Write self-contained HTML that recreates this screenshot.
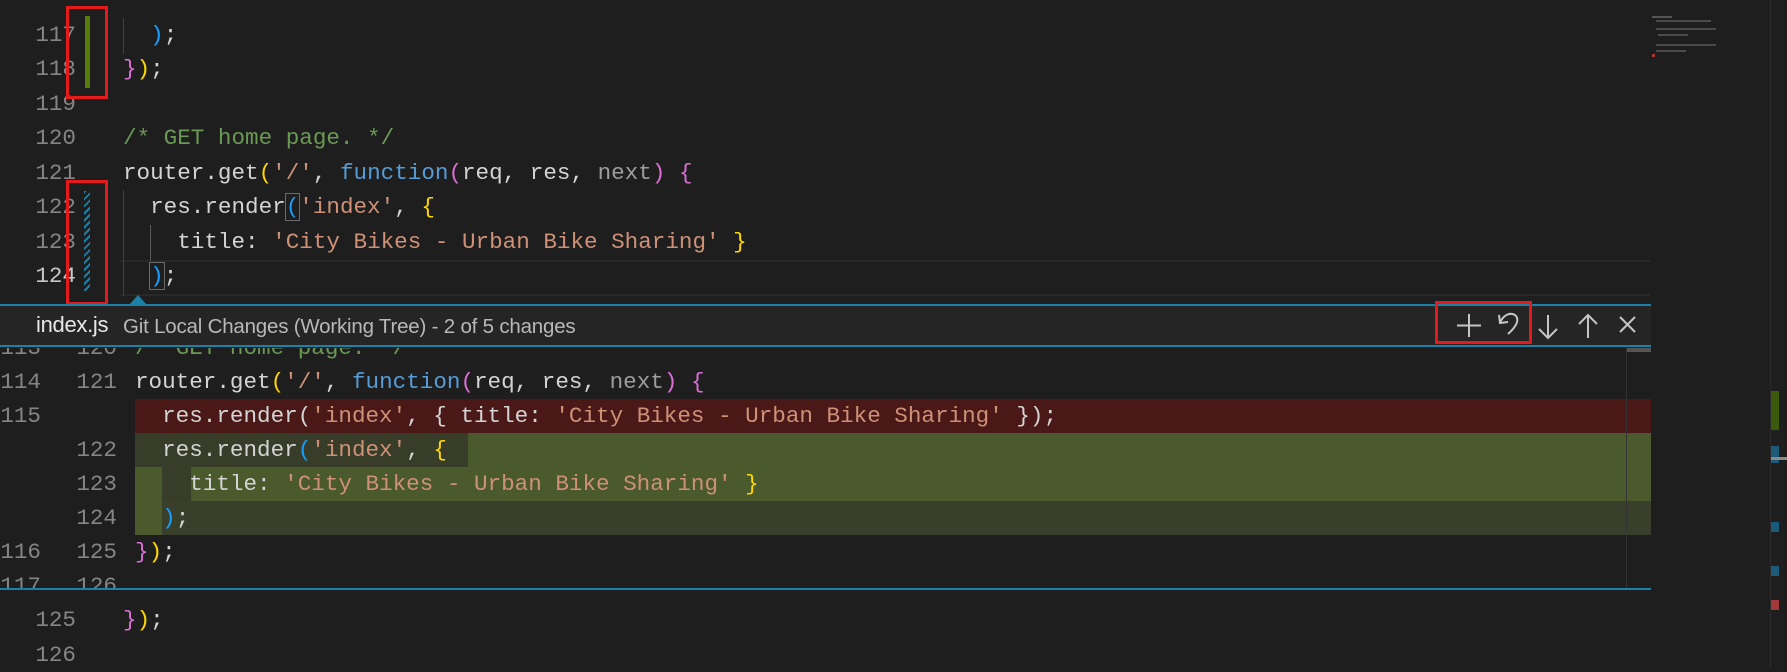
<!DOCTYPE html>
<html><head><meta charset="utf-8"><style>
*{margin:0;padding:0;box-sizing:border-box}
body{width:1787px;height:667px;background:#1e1e1e;overflow:hidden;position:relative;font-family:"Liberation Mono",monospace;font-size:22.6px;color:#d4d4d4}
.l{position:absolute;height:34px;line-height:34px;white-space:pre}
.n{position:absolute;height:34px;line-height:34px;text-align:right;color:#858585;white-space:pre}
.s{color:#ce9178}.c{color:#6a9955}.k{color:#569cd6}.y{color:#ffd700}.p{color:#da70d6}.b{color:#179fff}.g{color:#9d9d9d}.v{color:#d4d4d4}
.box{position:absolute;border:3px solid #e51b1b}
.bx{outline:1px solid #6a6a6a}
</style></head><body>
<div style="position:absolute;left:120px;top:260px;width:1530px;height:36px;border-top:2px solid #282828;border-bottom:2px solid #282828"></div>
<div style="position:absolute;left:123px;top:18px;width:1px;height:36px;background:#404040"></div>
<div style="position:absolute;left:123px;top:190px;width:1px;height:106px;background:#404040"></div>
<div style="position:absolute;left:150px;top:225px;width:1px;height:36px;background:#585858"></div>
<div class="n" style="left:0;width:76px;top:18px">117</div>
<div class="n" style="left:0;width:76px;top:52px">118</div>
<div class="n" style="left:0;width:76px;top:87px">119</div>
<div class="n" style="left:0;width:76px;top:121px">120</div>
<div class="n" style="left:0;width:76px;top:156px">121</div>
<div class="n" style="left:0;width:76px;top:190px">122</div>
<div class="n" style="left:0;width:76px;top:225px">123</div>
<div class="n" style="left:0;width:76px;top:259px;color:#c6c6c6">124</div>
<div style="position:absolute;left:85px;top:16px;width:5px;height:72px;background:#587c0c"></div>
<div style="position:absolute;left:84px;top:191px;width:6px;height:100px;background:repeating-linear-gradient(135deg,#1b81a8 0 2px,transparent 2px 5px)"></div>
<div class="box" style="left:66px;top:6px;width:42px;height:93px"></div>
<div class="box" style="left:66px;top:180px;width:42px;height:125px"></div>
<div class="l" style="left:123px;top:18px">  <span class="b">)</span>;</div>
<div class="l" style="left:123px;top:52px"><span class="p">}</span><span class="y">)</span>;</div>
<div class="l c" style="left:123px;top:121px">/* GET home page. */</div>
<div class="l" style="left:123px;top:156px">router.get<span class="y">(</span><span class="s">'/'</span>, <span class="k">function</span><span class="p">(</span>req, res, <span class="g">next</span><span class="p">)</span> <span class="p">{</span></div>
<div class="l" style="left:123px;top:190px">  res.render<span class="b bx">(</span><span class="s">'index'</span>, <span class="y">{</span></div>
<div class="l" style="left:123px;top:225px">    title: <span class="s">'City Bikes - Urban Bike Sharing'</span> <span class="y">}</span></div>
<div class="l" style="left:123px;top:259px">  <span class="b bx">)</span>;</div>
<div style="position:absolute;left:1652px;top:16px;width:20px;height:2px;background:#555"></div>
<div style="position:absolute;left:1656px;top:20px;width:55px;height:2px;background:#4a4a4a"></div>
<div style="position:absolute;left:1656px;top:28px;width:60px;height:2px;background:#4a4a4a"></div>
<div style="position:absolute;left:1658px;top:34px;width:30px;height:2px;background:#4a4a4a"></div>
<div style="position:absolute;left:1656px;top:44px;width:60px;height:2px;background:#4a4a4a"></div>
<div style="position:absolute;left:1656px;top:50px;width:30px;height:2px;background:#4a4a4a"></div>
<div style="position:absolute;left:1652px;top:54px;width:3px;height:3px;background:#a33"></div>
<div style="position:absolute;left:1770px;top:0;width:1px;height:667px;background:#2c2c2c"></div>
<div style="position:absolute;left:1771px;top:391px;width:8px;height:39px;background:#3b5a0c"></div>
<div style="position:absolute;left:1771px;top:446px;width:8px;height:17px;background:#1b5a78"></div>
<div style="position:absolute;left:1771px;top:457px;width:16px;height:3px;background:#8a8a8a"></div>
<div style="position:absolute;left:1771px;top:522px;width:8px;height:10px;background:#1b5a78"></div>
<div style="position:absolute;left:1771px;top:566px;width:8px;height:10px;background:#1b5a78"></div>
<div style="position:absolute;left:1771px;top:600px;width:8px;height:10px;background:#a03a3a"></div>
<div style="position:absolute;left:129px;top:295px;width:0;height:0;border-left:9px solid transparent;border-right:9px solid transparent;border-bottom:10px solid #1b81a8"></div>
<div style="position:absolute;left:0;top:304px;width:1651px;height:43px;background:#252526;border-top:2px solid #1b81a8;border-bottom:2px solid #1b81a8"></div>
<div style="position:absolute;left:36px;top:310px;font-family:'Liberation Sans',sans-serif;font-size:22px;color:#e8e8e8;line-height:30px;letter-spacing:-0.3px">index.js</div>
<div style="position:absolute;left:123px;top:312px;font-family:'Liberation Sans',sans-serif;font-size:20.5px;color:#b8b8b8;line-height:30px;letter-spacing:-0.2px">Git Local Changes (Working Tree) - 2 of 5 changes</div>
<svg style="position:absolute;left:1440px;top:305px" width="210" height="40" viewBox="0 0 210 40" fill="none" stroke="#c5c5c5" stroke-width="2">
<path d="M29 9v23M17 20.5h24"/>
<path d="M59 10l1 8 8-1M60 18C63 10 70 7 75 10C80 14 77 21 68 29"/>
<path d="M108 10v23M99 24l9 9 9-9"/>
<path d="M148 10v23M139 19l9-9 9 9"/>
<path d="M180 12l15 15M195 12l-15 15"/>
</svg>
<div class="box" style="left:1435px;top:301px;width:97px;height:43px"></div>
<div style="position:absolute;left:0;top:348px;width:1651px;height:240px;overflow:hidden">
 <div style="position:absolute;left:135px;top:51px;width:1516px;height:34px;background:#4b1818"></div>
 <div style="position:absolute;left:135px;top:85px;width:333px;height:34px;background:#373d29"></div>
 <div style="position:absolute;left:468px;top:85px;width:1183px;height:34px;background:#4b5a2c"></div>
 <div style="position:absolute;left:135px;top:119px;width:1516px;height:34px;background:#4b5a2c"></div>
 <div style="position:absolute;left:162px;top:119px;width:29px;height:34px;background:#373d29"></div>
 <div style="position:absolute;left:135px;top:153px;width:1516px;height:34px;background:#393f2a"></div>
 <div style="position:absolute;left:135px;top:153px;width:27px;height:34px;background:#4b5a2c"></div>
 <div style="position:absolute;left:1626px;top:0;width:1px;height:240px;background:#333"></div>
 <div style="position:absolute;left:1627px;top:0;width:24px;height:4px;background:#555"></div>
 <div class="n" style="left:0;width:41px;top:-17px">113</div><div class="n" style="left:50px;width:67px;top:-17px">120</div>
 <div class="l c" style="left:135px;top:-17px">/* GET home page. */</div>
 <div class="n" style="left:0;width:41px;top:17px">114</div><div class="n" style="left:50px;width:67px;top:17px">121</div>
 <div class="l" style="left:135px;top:17px">router.get<span class="y">(</span><span class="s">'/'</span>, <span class="k">function</span><span class="p">(</span>req, res, <span class="g">next</span><span class="p">)</span> <span class="p">{</span></div>
 <div class="n" style="left:0;width:41px;top:51px">115</div>
 <div class="l" style="left:135px;top:51px">  res.render(<span class="s">'index'</span>, { title: <span class="s">'City Bikes - Urban Bike Sharing'</span> });</div>
 <div class="n" style="left:50px;width:67px;top:85px">122</div>
 <div class="l" style="left:135px;top:85px">  res.render<span class="b">(</span><span class="s">'index'</span>, <span class="y">{</span></div>
 <div class="n" style="left:50px;width:67px;top:119px">123</div>
 <div class="l" style="left:135px;top:119px">    title: <span class="s">'City Bikes - Urban Bike Sharing'</span> <span class="y">}</span></div>
 <div class="n" style="left:50px;width:67px;top:153px">124</div>
 <div class="l" style="left:135px;top:153px">  <span class="b">)</span>;</div>
 <div class="n" style="left:0;width:41px;top:187px">116</div><div class="n" style="left:50px;width:67px;top:187px">125</div>
 <div class="l" style="left:135px;top:187px"><span class="p">}</span><span class="y">)</span>;</div>
 <div class="n" style="left:0;width:41px;top:221px">117</div><div class="n" style="left:50px;width:67px;top:221px">126</div>
</div>
<div style="position:absolute;left:0;top:588px;width:1651px;height:2px;background:#1b81a8"></div>
<div class="n" style="left:0;width:76px;top:603px">125</div>
<div class="l" style="left:123px;top:603px"><span class="p">}</span><span class="y">)</span>;</div>
<div class="n" style="left:0;width:76px;top:638px">126</div>
</body></html>
